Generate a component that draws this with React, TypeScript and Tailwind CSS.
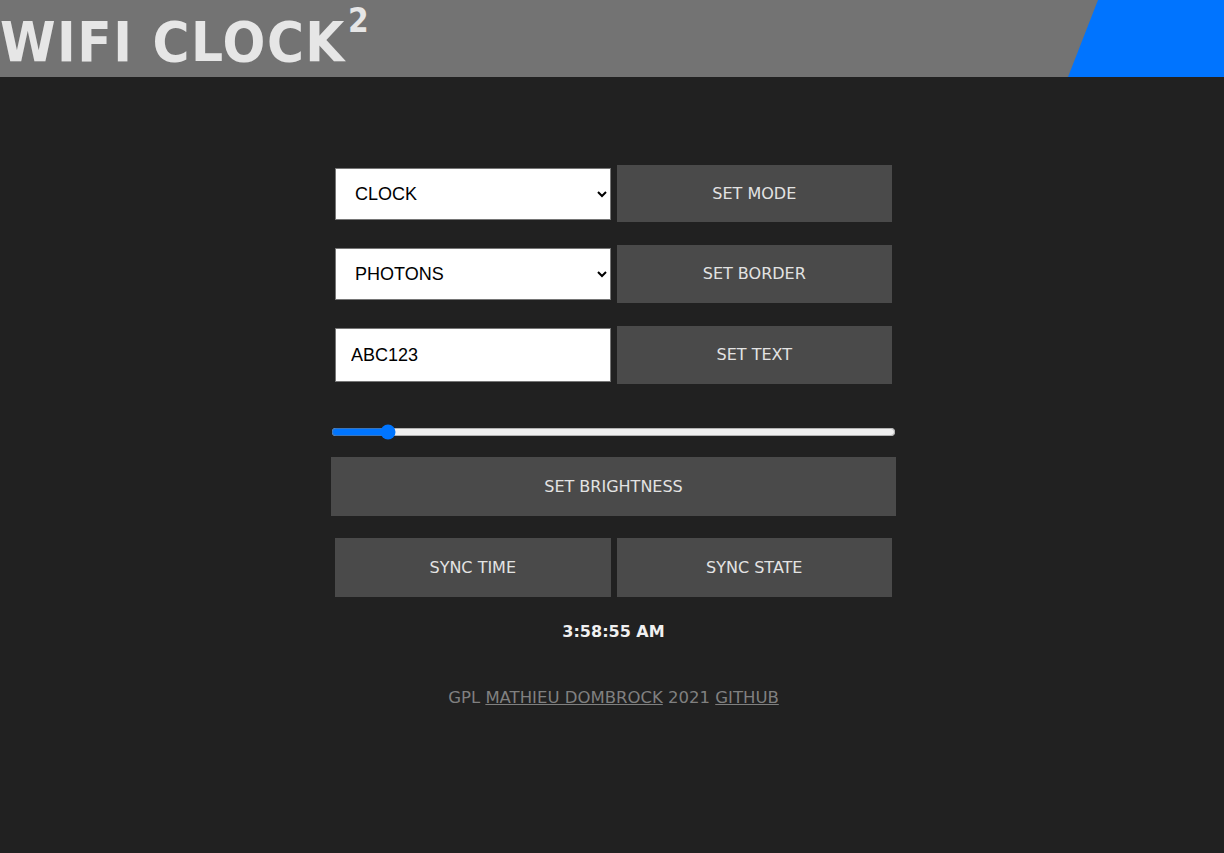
import React from "react";

export default function App() {
  const body = { fontFamily: '"DejaVu Sans", sans-serif' };
  return (
    <div className="min-h-[853px] bg-[#212121]" style={body}>
      <header className="flex h-[77px] bg-[#737373]">
        <h1 className="flex-1 pt-[10px] text-[56px] font-bold leading-[64px] tracking-[1.5px] text-[#e6e6e6] [font-family:'DejaVu_Sans_Condensed','DejaVu_Sans',sans-serif]">
          WIFI CLOCK<sup className="relative top-[-4px] ml-[2px] align-top text-[33px] leading-[30px]">2</sup>
        </h1>
        <div className="w-[156px] bg-[#0074ff] [clip-path:polygon(30px_0,100%_0,100%_100%,0_100%)]" />
      </header>

      <main className="mx-auto mt-[88px] flex w-[568px] flex-col items-stretch pl-[3px]">
        <div className="flex items-center gap-[6px] px-[4px]">
          <select className="h-[52px] w-[276px] border border-[#767676] bg-white pl-[15px] pr-[2px] text-[18px] text-black [font-family:'Liberation_Sans',Arial,sans-serif]">
            <option>CLOCK</option>
          </select>
          <button className="h-[57px] w-[276px] bg-[#4a4a4a] text-[16px] text-[#e3e3e3]">SET MODE</button>
        </div>

        <div className="mt-[23px] flex items-center gap-[6px] px-[4px]">
          <select className="h-[52px] w-[276px] border border-[#767676] bg-white pl-[15px] pr-[2px] text-[18px] text-black [font-family:'Liberation_Sans',Arial,sans-serif]">
            <option>PHOTONS</option>
          </select>
          <button className="h-[58px] w-[276px] bg-[#4a4a4a] text-[16px] text-[#e3e3e3]">SET BORDER</button>
        </div>

        <div className="mt-[23px] flex items-center gap-[6px] px-[4px]">
          <input
            defaultValue="ABC123"
            className="h-[54px] w-[276px] border border-[#767676] bg-white pl-[15px] text-[18px] text-black outline-none [font-family:'Liberation_Sans',Arial,sans-serif]"
          />
          <button className="h-[58px] w-[276px] bg-[#4a4a4a] text-[16px] text-[#e3e3e3]">SET TEXT</button>
        </div>

        <input
          type="range"
          min={0}
          max={100}
          defaultValue={9}
          className="mt-[40px] h-[16px] w-full accent-[#0075ff]"
        />

        <button className="mt-[17px] h-[59px] w-full bg-[#4a4a4a] text-[16px] text-[#e3e3e3]">SET BRIGHTNESS</button>

        <div className="mt-[22px] flex items-center gap-[6px] px-[4px]">
          <button className="h-[59px] w-[276px] bg-[#4a4a4a] text-[16px] text-[#e3e3e3]">SYNC TIME</button>
          <button className="h-[59px] w-[276px] bg-[#4a4a4a] text-[16px] text-[#e3e3e3]">SYNC STATE</button>
        </div>

        <p className="mt-[23px] text-center text-[16px] font-bold text-[#f0f0f0]">3:58:55 AM</p>

        <p className="mt-[42px] text-center text-[16.5px] text-[#808080]">
          GPL <a className="underline">MATHIEU DOMBROCK</a> 2021 <a className="underline">GITHUB</a>
        </p>
      </main>
    </div>
  );
}
